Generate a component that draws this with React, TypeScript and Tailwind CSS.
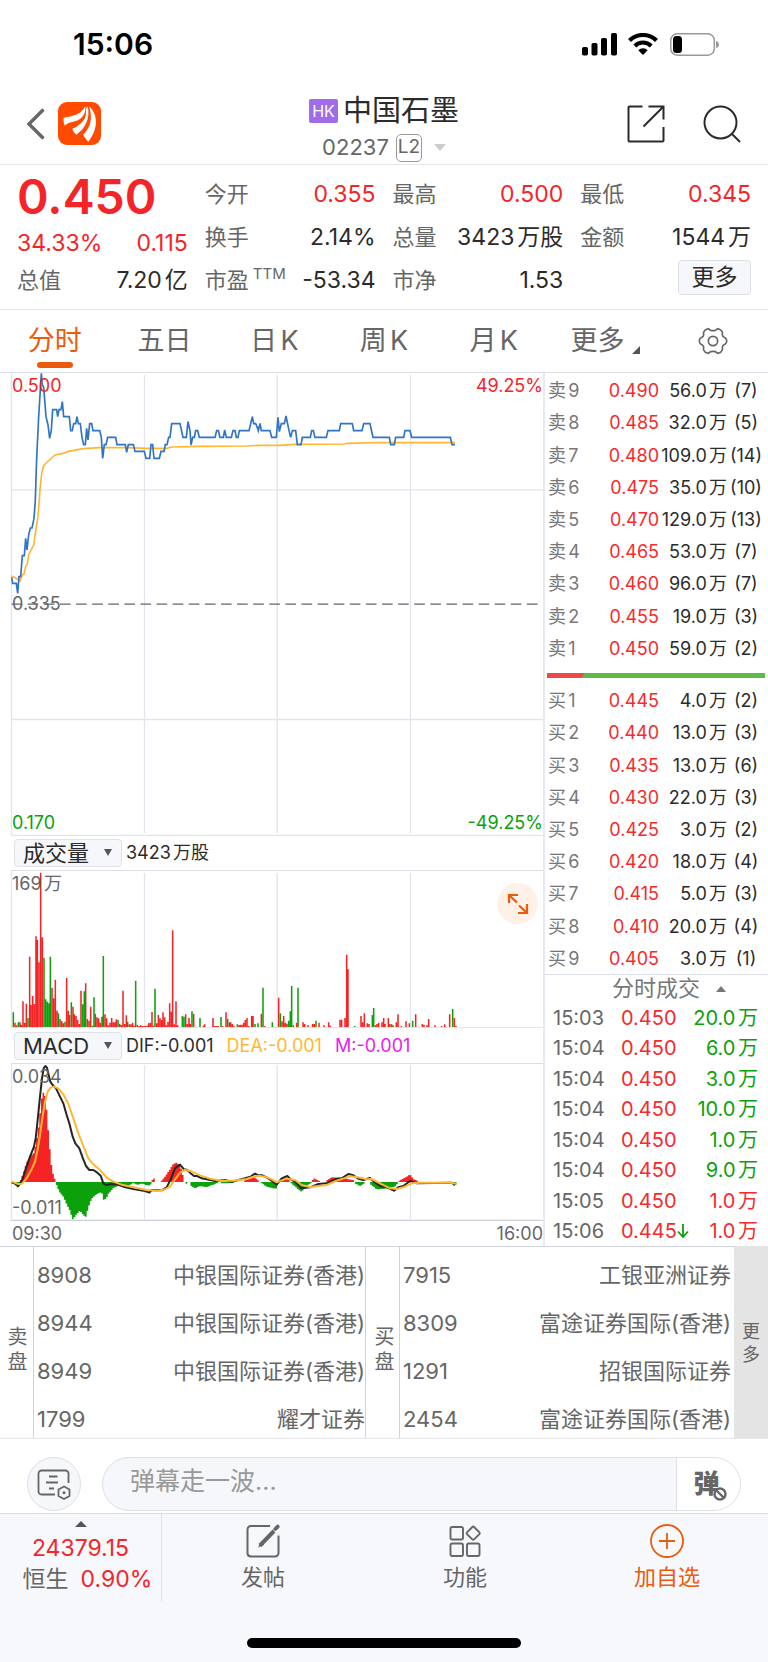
import React from "react";

type Level = [label: string, price: string, volume: string, count: string];
type Bar = [x: number, top: number];

const sells: Level[] = [
  ["卖9", "0.490", "56.0万", "(7)"],
  ["卖8", "0.485", "32.0万", "(5)"],
  ["卖7", "0.480", "109.0万", "(14)"],
  ["卖6", "0.475", "35.0万", "(10)"],
  ["卖5", "0.470", "129.0万", "(13)"],
  ["卖4", "0.465", "53.0万", "(7)"],
  ["卖3", "0.460", "96.0万", "(7)"],
  ["卖2", "0.455", "19.0万", "(3)"],
  ["卖1", "0.450", "59.0万", "(2)"],
];

const buys: Level[] = [
  ["买1", "0.445", "4.0万", "(2)"],
  ["买2", "0.440", "13.0万", "(3)"],
  ["买3", "0.435", "13.0万", "(6)"],
  ["买4", "0.430", "22.0万", "(3)"],
  ["买5", "0.425", "3.0万", "(2)"],
  ["买6", "0.420", "18.0万", "(4)"],
  ["买7", "0.415", "5.0万", "(3)"],
  ["买8", "0.410", "20.0万", "(4)"],
  ["买9", "0.405", "3.0万", "(1)"],
];

const trades = [
  { time: "15:03", price: "0.450", volume: "20.0万", up: false },
  { time: "15:04", price: "0.450", volume: "6.0万", up: false },
  { time: "15:04", price: "0.450", volume: "3.0万", up: false },
  { time: "15:04", price: "0.450", volume: "10.0万", up: false },
  { time: "15:04", price: "0.450", volume: "1.0万", up: false },
  { time: "15:04", price: "0.450", volume: "9.0万", up: false },
  { time: "15:05", price: "0.450", volume: "1.0万", up: true },
  { time: "15:06", price: "0.445", volume: "1.0万", up: true, drop: true },
];

const sellBrokers = [
  ["8908", "中银国际证券(香港)"],
  ["8944", "中银国际证券(香港)"],
  ["8949", "中银国际证券(香港)"],
  ["1799", "耀才证券"],
];

const buyBrokers = [
  ["7915", "工银亚洲证券"],
  ["8309", "富途证券国际(香港)"],
  ["1291", "招银国际证券"],
  ["2454", "富途证券国际(香港)"],
];

// Chart series use three drawing units per CSS pixel.
const priceLine =
  "35,832 38,850 49,850 53,880 57,830 62,830 67,767 73,767 77,715 81,750 86,705 91,684 96,684 102,655 106,600 110,475 116,350 124,220 127,255 131,262 138,350 144,375 149,415 154,390 158,329 170,329 173,350 177,329 183,329 187,305 191,350 208,350 212,392 217,392 221,371 227,371 231,350 235,371 241,371 246,412 251,434 256,434 260,385 264,420 269,371 275,371 279,392 299,392 304,412 308,475 313,434 318,434 323,412 347,412 351,434 376,434 380,457 385,434 400,434 405,454 433,454 438,475 449,475 453,434 458,434 462,475 478,475 483,454 492,454 496,434 501,434 506,412 510,412 515,371 540,371 549,412 559,412 564,365 570,392 573,435 578,412 583,412 587,392 593,392 598,412 645,412 650,392 655,392 660,412 670,412 674,390 679,412 694,412 699,392 705,392 709,412 714,412 718,392 747,392 757,350 761,371 767,371 771,380 775,392 780,370 784,392 810,392 815,412 829,412 834,352 838,395 844,371 853,371 858,348 867,392 872,412 877,392 887,392 892,434 903,434 907,412 931,412 935,392 940,392 945,412 979,412 984,392 1018,392 1022,371 1057,371 1061,392 1086,392 1091,371 1110,371 1119,412 1168,412 1172,434 1183,434 1187,412 1211,412 1215,392 1230,392 1235,412 1351,412 1356,434 1365,434";
const averageLine =
  "35,828 48,835 60,843 67,825 72,822 77,800 82,792 86,765 93,750 101,735 106,700 114,650 120,570 125,520 131,497 145,483 165,465 190,460 205,454 250,446 300,443 380,443 440,445 500,445 515,441 600,439 740,438 780,436 840,436 880,433 1035,432 1040,430 1120,428 1365,428";

const volumeUp: Bar[] = [
  [45, 668], [50, 676], [60, 667], [64, 675], [69, 604], [74, 668], [79, 611], [89, 470], [93, 615], [98, 588], [103, 612], [108, 409],
  [112, 420], [117, 487], [122, 218], [127, 412], [156, 563], [161, 595], [166, 539], [171, 632], [180, 657], [185, 663], [190, 670],
  [200, 534], [205, 632], [209, 645], [219, 620], [223, 643], [228, 648], [233, 660], [238, 672], [243, 572], [257, 550], [267, 662],
  [272, 620], [286, 641], [291, 652], [296, 655], [301, 668], [315, 643], [320, 655], [325, 676], [330, 668], [335, 654], [340, 667],
  [345, 667], [349, 658], [359, 672], [364, 675], [369, 572], [374, 672], [379, 646], [388, 673], [393, 673], [398, 668], [403, 677],
  [412, 675], [417, 678], [422, 676], [427, 678], [432, 678], [437, 678], [442, 677], [446, 670], [451, 668], [456, 636], [461, 677],
  [470, 670], [475, 645], [480, 655], [485, 660], [489, 637], [494, 652], [499, 676], [504, 665], [509, 610], [514, 635], [518, 391],
  [523, 673], [528, 604], [533, 676], [557, 643], [562, 672], [567, 654], [571, 672], [581, 641], [610, 677], [614, 673], [639, 654],
  [644, 678], [649, 678], [654, 678], [668, 678], [678, 637], [688, 667], [692, 667], [697, 672], [702, 678], [717, 676], [721, 674],
  [726, 674], [731, 668], [736, 660], [741, 654], [746, 678], [755, 648], [759, 648], [784, 641], [794, 678], [836, 593], [846, 664],
  [851, 648], [856, 668], [861, 671], [880, 676], [890, 668], [909, 667], [914, 672], [924, 676], [938, 672], [943, 672], [957, 668],
  [972, 676], [986, 667], [991, 677], [1020, 659], [1025, 659], [1035, 654], [1040, 464], [1044, 508], [1083, 648], [1088, 667],
  [1093, 640], [1102, 670], [1107, 672], [1126, 676], [1131, 672], [1136, 668], [1146, 667], [1151, 654], [1155, 672], [1165, 654],
  [1170, 672], [1179, 676], [1189, 667], [1194, 643], [1204, 678], [1218, 664], [1228, 670], [1247, 643], [1267, 672], [1272, 675],
  [1281, 676], [1286, 657], [1305, 676], [1325, 678], [1334, 673], [1349, 643], [1363, 654], [1368, 678],
];
const volumeDown: Bar[] = [
  [40, 637], [55, 667], [84, 654], [132, 473], [137, 598], [142, 605], [147, 610], [151, 470], [175, 640], [195, 665], [214, 607],
  [248, 613], [253, 574], [262, 657], [277, 677], [282, 592], [306, 650], [310, 468], [354, 660], [383, 665], [407, 542], [465, 566],
  [547, 648], [552, 650], [576, 634], [600, 654], [663, 651], [683, 656], [712, 673], [765, 672], [774, 670], [789, 563], [817, 667],
  [841, 640], [866, 662], [871, 634], [875, 558], [894, 563], [948, 662], [1064, 678], [1117, 645], [1121, 624], [1175, 673],
  [1238, 662], [1358, 627],
];

const ZERO = 456;
// Outlines of each histogram run; values above ZERO are drawn red, below green.
const macdRuns: Bar[][] = [
  [[38, 459], [46, 464], [54, 474], [60, 462]],
  [[62, 450], [70, 430], [79, 400], [90, 380], [101, 370], [107, 345], [113, 310], [118, 275], [122, 232], [127, 190], [133, 187], [138, 215], [142, 270], [147, 328], [152, 388], [157, 425], [162, 440], [166, 452]],
  [[170, 465], [175, 478], [180, 488], [190, 500], [200, 522], [210, 542], [218, 569], [224, 560], [232, 550], [240, 542], [248, 552], [257, 562], [263, 540], [270, 517], [276, 505], [285, 496], [300, 487], [306, 490], [310, 510], [318, 506], [325, 492], [340, 474], [360, 466], [372, 463], [380, 470], [388, 466], [400, 459], [412, 465], [425, 460], [437, 465], [450, 467], [454, 459]],
  [[457, 450], [461, 444], [466, 453]],
  [[485, 452], [495, 440], [510, 418], [520, 402], [530, 398], [540, 406], [545, 422], [552, 450]],
  [[559, 461], [563, 461]],
  [[574, 468], [585, 475], [600, 468], [620, 471], [640, 464], [652, 459]],
  [[665, 460], [700, 459]],
  [[735, 451], [750, 446], [765, 442], [774, 451]],
  [[785, 459], [800, 470], [820, 475], [833, 476]],
  [[842, 450], [858, 443], [870, 452]],
  [[874, 460], [895, 478], [905, 486], [915, 470], [934, 459]],
  [[938, 450], [942, 445], [960, 454]],
  [[982, 450], [995, 442], [1020, 443], [1060, 450]],
  [[1067, 461], [1080, 468], [1093, 460]],
  [[1113, 464], [1130, 478], [1155, 476], [1185, 470], [1193, 460]],
  [[1198, 452], [1220, 440], [1230, 433], [1240, 447], [1255, 454]],
  [[1260, 458], [1355, 458], [1368, 465]],
];
const difLine =
  "35,458 45,461 55,468 66,452 78,415 90,380 102,350 107,325 113,270 120,200 126,145 131,115 136,108 141,113 146,135 151,155 158,165 168,175 180,200 190,220 200,255 208,280 218,320 226,340 238,355 248,383 258,408 268,420 280,420 292,428 302,437 310,460 318,465 335,462 350,463 370,470 400,477 430,482 448,488 455,480 485,481 500,472 512,448 525,415 540,404 552,418 562,420 570,428 582,438 592,438 605,445 620,448 645,453 675,450 695,455 715,450 735,445 752,440 765,431 775,436 787,436 800,442 815,452 830,464 845,445 862,438 872,448 885,455 905,475 930,472 955,462 980,460 1005,448 1025,445 1045,432 1060,436 1075,446 1090,450 1110,444 1122,455 1140,468 1160,472 1182,482 1195,472 1210,468 1230,453 1250,460 1355,458 1365,466";
const deaLine =
  "35,455 55,462 66,461 80,445 95,418 105,395 113,358 120,315 127,265 135,215 143,185 152,173 162,170 175,175 190,193 205,222 220,265 235,310 250,348 265,385 280,403 300,420 320,443 340,455 365,464 400,472 440,480 475,482 495,478 510,470 520,455 540,428 555,420 575,424 600,436 630,446 665,452 700,452 740,447 760,440 775,437 795,440 815,448 830,457 845,451 860,446 885,450 905,465 930,471 980,465 1010,452 1050,439 1070,441 1100,448 1115,447 1140,460 1170,475 1190,477 1210,472 1235,460 1260,458 1350,458 1368,461";

function histogram(run: Bar[]): Bar[] {
  const bars: Bar[] = [];
  const end = run[run.length - 1][0];
  for (let x = run[0][0]; x <= end; x += 4.86) {
    const i = Math.max(1, run.findIndex((p) => p[0] >= x));
    const [x0, y0] = run[i - 1];
    const [x1, y1] = run[i];
    bars.push([x, y0 + ((y1 - y0) * (x - x0)) / (x1 - x0)]);
  }
  return bars;
}

function barPath(bars: Bar[], base: number) {
  return bars.map(([x, y]) => `M${x} ${base}V${y}`).join("");
}

function Grid({ top, bottom }: { top: number; bottom: number }) {
  return (
    <path
      d={`M34.5 ${top - 8}V${bottom + 8}M433.5 ${top}V${bottom}M831.5 ${top}V${bottom}M1231.5 ${top}V${bottom}`}
      stroke="#e2e5ee"
      strokeWidth="4"
      fill="none"
    />
  );
}

function PriceChart() {
  return (
    <div className="relative">
      <svg viewBox="0 219 1629 1389" preserveAspectRatio="none" className="block h-[463px] w-full">
        <Grid top={225} bottom={1599} />
        <path d="M34 569.5H1629M34 1258.5H1629M34 1606.5H1629" stroke="#e2e5ee" strokeWidth="4" />
        <path d="M35 912.5H1615" stroke="#666" strokeWidth="4" strokeDasharray="32 16.3" />
        <polyline points={averageLine} fill="none" stroke="#ffb733" strokeWidth="5" />
        <polyline points={priceLine} fill="none" stroke="#2f74c5" strokeWidth="5" />
      </svg>
      <span className="absolute left-3 top-px text-lg leading-6 text-[#f42528]">0.500</span>
      <span className="absolute right-0 top-px text-lg leading-6 text-[#f42528]">49.25%</span>
      <span className="absolute left-3 top-[219px] text-lg leading-6 text-[#666]">0.335</span>
      <span className="absolute bottom-px left-3 text-lg leading-6 text-[#0aa10a]">0.170</span>
      <span className="absolute bottom-px right-0 text-lg leading-6 text-[#0aa10a]">-49.25%</span>
    </div>
  );
}

function VolumeChart() {
  return (
    <div className="relative">
      <svg viewBox="0 213 1629 471" preserveAspectRatio="none" className="block h-[157px] w-full">
        <Grid top={219} bottom={681} />
        <path d="M34 682.5H1629" stroke="#e2e5ee" strokeWidth="3" />
        <path d={barPath(volumeUp, 681)} stroke="#f52424" strokeWidth="4.6" />
        <path d={barPath(volumeDown, 681)} stroke="#0aa10a" strokeWidth="4.6" />
      </svg>
      <span className="absolute left-3 top-px text-lg leading-6 text-[#666]">169万</span>
      <button aria-label="全屏" className="absolute right-[5px] top-3 flex size-[41px] items-center justify-center rounded-full bg-[#fff0e8]">
        <svg viewBox="0 0 22 22" className="size-[22px]" fill="none" stroke="#ec5a0c" strokeWidth="2.2">
          <path d="M2 10V2h9M2.500 2.500l7.500 7M12 12.500l7.500 7M11 20H20v-9" />
        </svg>
      </button>
    </div>
  );
}

function MacdChart() {
  const bars = macdRuns.flatMap(histogram);
  return (
    <div className="relative">
      <svg viewBox="0 102 1629 471" preserveAspectRatio="none" className="block h-[157px] w-full">
        <Grid top={106} bottom={568} />
        <path d={barPath(bars.filter((b) => b[1] < ZERO), ZERO)} stroke="#f52424" strokeWidth="4.900" />
        <path d={barPath(bars.filter((b) => b[1] >= ZERO), ZERO)} stroke="#0aa10a" strokeWidth="4.900" />
        <path d="M34 571.5H1629" stroke="#cdd0d8" strokeWidth="4" />
        <polyline points={difLine} fill="none" stroke="#252525" strokeWidth="6" strokeLinejoin="round" />
        <polyline points={deaLine} fill="none" stroke="#ffb733" strokeWidth="6" strokeLinejoin="round" />
      </svg>
      <span className="absolute left-3 top-px text-lg leading-6 text-[#666]">0.034</span>
      <span className="absolute bottom-px left-3 text-lg leading-6 text-[#666]">-0.011</span>
    </div>
  );
}

function IndicatorSelect({ label, options }: { label: string; options: string[] }) {
  return (
    <span className="relative ml-[14px] inline-flex">
      <select
        aria-label={label}
        className="h-7 w-[108px] appearance-none rounded border border-[#dfe1e7] bg-[#f6f7fa] pl-2 text-[22px] leading-[26px] text-[#2b2b2b]"
      >
        {options.map((o) => (
          <option key={o}>{o}</option>
        ))}
      </select>
      <svg viewBox="0 0 8 7" className="pointer-events-none absolute right-[10px] top-[10px] h-[7px] w-2">
        <path d="M0 0h8L4 7z" fill="#555" />
      </svg>
    </span>
  );
}

function LevelTable({ caption, rows }: { caption: string; rows: Level[] }) {
  return (
    <table aria-label={caption} className="h-[290px] w-full table-fixed border-collapse text-lg leading-6">
      <colgroup>
        <col className="w-[43px]" />
        <col className="w-[71px]" />
        <col />
        <col className="w-[38px]" />
      </colgroup>
      <tbody>
        {rows.map(([label, price, volume, count]) => (
          <tr key={label}>
            <th scope="row" className="whitespace-nowrap p-0 pl-[3px] pt-[2px] text-left font-normal text-[#777]">{label}</th>
            <td className="p-0 pt-[2px] text-right text-[#f52a2c]">{price}</td>
            <td className="p-0 pt-[2px] text-[#2b2b2b]">
              <div className="flex justify-end whitespace-nowrap">{volume}</div>
            </td>
            <td className="whitespace-nowrap p-0 pt-[2px] text-center text-[#2b2b2b]">{count}</td>
          </tr>
        ))}
      </tbody>
    </table>
  );
}

function BrokerTable({ caption, rows, className }: { caption: string; rows: string[][]; className: string }) {
  return (
    <div className={"border-l border-[#cfd3dc] pb-[5px] " + className}>
      <table aria-label={caption} className="w-full border-collapse text-[22px] leading-7 text-[#666]">
        <tbody>
          {rows.map(([id, name]) => (
            <tr key={id} className="group">
              <td className="p-0 pb-[6px] pt-[14px] group-last:pb-0">{id}</td>
              <td className="whitespace-nowrap p-0 pb-[6px] pt-[14px] text-right group-last:pb-0">{name}</td>
            </tr>
          ))}
        </tbody>
      </table>
    </div>
  );
}

function Stat({ label, value, red, sup }: { label: string; value: string; red?: boolean; sup?: string }) {
  return (
    <div className="flex h-[43px] items-center justify-between whitespace-nowrap pt-[2px]">
      <dt className="flex items-center text-[22px] text-[#666]">
        {label}
        {sup && <span className="ml-1 self-start text-[15px] leading-5">{sup}</span>}
      </dt>
      <dd className={red ? "text-[23px] text-[#f42528]" : "text-[23px] text-[#2b2b2b]"}>{value}</dd>
    </div>
  );
}

function StatusBar() {
  return (
    <div className="flex h-[83px] items-center justify-between pl-[73px] pr-[49px] pt-[5px]">
      <span className="text-[30px] font-semibold text-black">15:06</span>
      <div className="flex items-center">
        <svg viewBox="0 0 35 23" className="h-[23px] w-[35px]">
          <rect x="0" y="14" width="6" height="8.500" rx="1.800" />
          <rect x="9.500" y="10" width="6" height="12.500" rx="1.800" />
          <rect x="19" y="5" width="6" height="17.500" rx="1.800" />
          <rect x="29" y="0" width="6" height="22.500" rx="1.800" />
        </svg>
        <svg viewBox="0 0 30 22" className="ml-[11px] h-[22px] w-[30px]">
          <path d="M1.500 7.600a19 19 0 0 1 27 0" fill="none" stroke="#000" strokeWidth="4.200" />
          <path d="M6.800 13a11.600 11.600 0 0 1 16.400 0" fill="none" stroke="#000" strokeWidth="4" />
          <path d="M15 22l-4.700-4.700a6.700 6.700 0 0 1 9.400 0z" />
        </svg>
        <svg viewBox="0 0 49 23" className="ml-3 h-[23px] w-[49px]">
          <rect x=".8" y=".8" width="43.500" height="21.400" rx="6.500" fill="none" stroke="#999" strokeWidth="1.500" />
          <rect x="3" y="3" width="9" height="17" rx="3.500" />
          <path d="M46 8q3 1 3 3.500T46 15z" fill="#999" />
        </svg>
      </div>
    </div>
  );
}

function Header() {
  return (
    <header className="grid h-[82px] grid-cols-[1fr_auto_1fr] items-center border-b border-[#e6e6e8]">
      <div className="flex items-center pl-[26px]">
        <button aria-label="返回">
          <svg viewBox="0 0 19 32" className="h-8 w-[19px]" fill="none" stroke="#666" strokeWidth="3.400">
            <path d="M17.500 1.500L3 16l14.500 14.500" />
          </svg>
        </button>
        <a href="#home" aria-label="首页" className="ml-[13px]">
          <svg viewBox="0 0 129 129" className="size-[43px]">
            <rect width="129" height="129" rx="27" fill="#ff4a00" />
            <g fill="#fff">
              <path d="M17 47C45 43 70 38 82 13C86 43 62 57 44 60C32 62 25 66 20 71C17 62 16 55 17 47Z" />
              <path d="M89 13C98 50 80 82 55 98C49 92 45 87 43 80C70 68 88 50 84 20Z" />
              <path d="M93 13C108 25 114 45 114 60C113 85 103 103 91 119C85 112 79 105 75 98C96 80 106 50 93 13Z" />
            </g>
          </svg>
        </a>
      </div>
      <div className="flex flex-col items-center pt-2">
        <h1 className="flex h-[34px] items-center whitespace-nowrap text-[29px] leading-[34px] text-[#2b2b2b]">
          <span className="mr-[5px] flex h-6 w-[29px] items-center justify-center rounded-xs bg-[#a06cea] text-base text-white">HK</span>
          中国石墨
        </h1>
        <div className="mt-[6px] flex h-7 items-center text-[22px] text-[#666]">
          02237
          <span className="ml-[7px] flex h-7 w-[26px] items-center justify-center rounded-[5px] border border-[#999] text-[19px]">L2</span>
          <svg viewBox="0 0 12 7" className="ml-3 h-[7px] w-3">
            <path d="M0 0h12L6 7z" fill="#ccc" />
          </svg>
        </div>
      </div>
      <div className="flex items-center justify-end gap-[38px] pr-[27px]">
        <button aria-label="分享">
          <svg viewBox="0 0 38 38" className="size-[38px]" fill="none" stroke="#2b2b2b" strokeWidth="2">
            <path d="M15.500 1.500H2.500a1 1 0 0 0-1 1v33a1 1 0 0 0 1 1h33a1 1 0 0 0 1-1V22M21.500 1.500h15v13M36 2L16.500 21.500" />
          </svg>
        </button>
        <button aria-label="搜索">
          <svg viewBox="0 0 38 38" className="size-[38px]" fill="none" stroke="#2b2b2b" strokeWidth="2">
            <circle cx="17.500" cy="17.500" r="16" />
            <path d="M28.500 28.500l8.500 8.500" />
          </svg>
        </button>
      </div>
    </header>
  );
}

function Quote() {
  return (
    <section className="grid grid-cols-4 gap-x-[17px] border-b border-[#e6e6e8] px-[17px] pb-2 pt-[7px]">
      <div>
        <div className="h-[50px] text-[48px] font-semibold leading-[50px] text-[#f42528]">0.450</div>
        <div className="flex h-9 items-center justify-between pt-[6px] text-[23px] leading-[30px] text-[#f42528]">
          <span>34.33%</span>
          <span>0.115</span>
        </div>
        <dl>
          <Stat label="总值" value="7.20亿" />
        </dl>
      </div>
      <dl>
        <Stat label="今开" value="0.355" red />
        <Stat label="换手" value="2.14%" />
        <Stat label="市盈" sup="TTM" value="-53.34" />
      </dl>
      <dl>
        <Stat label="最高" value="0.500" red />
        <Stat label="总量" value="3423万股" />
        <Stat label="市净" value="1.53" />
      </dl>
      <div>
        <dl>
          <Stat label="最低" value="0.345" red />
          <Stat label="金额" value="1544万" />
        </dl>
        <button className="ml-auto mt-[2px] flex h-[35px] w-[73px] items-center justify-center rounded border border-[#dcdee6] bg-[#f6f7fa] text-[23px] text-[#2b2b2b]">
          更多
        </button>
      </div>
    </section>
  );
}

function Tabs() {
  return (
    <nav className="grid h-[63px] grid-cols-7 border-b border-[#dcdfe6] text-[27px] text-[#666]">
      <button className="relative text-[#ec5a0c]">
        分时
        <span className="absolute inset-x-0 bottom-1 mx-auto h-[6px] w-9 rounded-full bg-[#ec5a0c]" />
      </button>
      <button>五日</button>
      <button>日K</button>
      <button>周K</button>
      <button>月K</button>
      <button className="flex items-center justify-center pl-1">
        更多
        <svg viewBox="0 0 8 8" className="ml-2 mt-[18px] size-2">
          <path d="M8 0v8H0z" fill="#555" />
        </svg>
      </button>
      <button aria-label="设置" className="flex items-center justify-center">
        <svg viewBox="0 0 90 84" className="h-7 w-[30px]" fill="none" stroke="#666" strokeWidth="5">
          <path
            strokeLinejoin="round"
            d="M29 5C32 5 35 9 38 10Q45 12 52 10C55 9 58 5 61 5Q70 8 73 15C74 19 72 23 74 27Q77 31 82 33C86 35 86 38 86 42C86 46 86 49 82 51Q77 53 74 57C72 61 74 65 73 69Q70 76 61 79C58 79 55 75 52 74Q45 72 38 74C35 75 32 79 29 79Q20 76 17 69C16 65 18 61 16 57Q13 53 8 51C4 49 4 46 4 42C4 38 4 35 8 33Q13 31 16 27C18 23 16 19 17 15Q20 8 29 5Z"
          />
          <circle cx="45" cy="42" r="14" />
        </svg>
      </button>
    </nav>
  );
}

function MarketPanel() {
  return (
    <main className="flex">
      <div className="min-w-0 flex-1">
        <PriceChart />
        <div className="ml-[11px] flex h-[35px] items-center border-b border-[#dcdfe6] text-lg text-[#2b2b2b]">
          <span className="-ml-[11px] inline-flex">
            <IndicatorSelect label="副图一" options={["成交量", "MACD"]} />
          </span>
          <span className="ml-1">3423万股</span>
        </div>
        <VolumeChart />
        <div className="ml-[11px] flex h-9 items-center border-b border-[#dcdfe6] text-lg">
          <span className="-ml-[11px] inline-flex">
            <IndicatorSelect label="副图二" options={["MACD", "成交量"]} />
          </span>
          <span className="ml-1 text-[#2b2b2b]">DIF:-0.001</span>
          <span className="ml-[13px] text-[#ffb733]">DEA:-0.001</span>
          <span className="ml-[13px] text-[#e224e8]">M:-0.001</span>
        </div>
        <MacdChart />
        <div className="flex h-[25px] items-center justify-between pl-3 text-lg text-[#666]">
          <span>09:30</span>
          <span>16:00</span>
        </div>
      </div>
      <aside className="w-[225px] border-l-2 border-[#e8eaf1]">
        <div className="pr-[3px] pt-px">
          <LevelTable caption="卖盘" rows={sells} />
          <svg viewBox="0 0 218 5" preserveAspectRatio="none" className="mb-[6px] ml-[2px] mt-[9px] block h-[5px] w-[218px]">
            <path d="M0 0h218v5H0z" fill="#5bbb45" />
            <path d="M0 0h38l-4 5H0z" fill="#f04848" />
          </svg>
          <LevelTable caption="买盘" rows={buys} />
        </div>
        <button className="flex h-7 w-full items-center border-t border-[#dcdfe6] pl-[67px] text-[22px] leading-[27px] text-[#777]">
          分时成交
          <svg viewBox="0 0 10 6" className="ml-4 h-[6px] w-[10px]">
            <path d="M5 0l5 6H0z" fill="#777" />
          </svg>
        </button>
        <table aria-label="分时成交" className="h-[244px] w-full table-fixed border-collapse text-xl leading-6">
          <colgroup>
            <col className="w-[76px]" />
            <col className="w-[68px]" />
            <col />
          </colgroup>
          <tbody>
            {trades.map((t, i) => (
              <tr key={i}>
                <td className="p-0 pl-2 pt-px text-[#666]">{t.time}</td>
                <td className="p-0 pt-px text-[#f52a2c]">
                  <div className="flex items-center">
                    {t.price}
                    {t.drop && (
                      <svg viewBox="0 0 12 14" className="h-[14px] w-3 shrink-0" fill="none" stroke="#0aa10a" strokeWidth="1.800">
                        <path d="M6 0v13M1 7.500l5 5.500 5-5.500" />
                      </svg>
                    )}
                  </div>
                </td>
                <td className={t.up ? "p-0 pr-[10px] pt-px text-right text-[#f52a2c]" : "p-0 pr-[10px] pt-px text-right text-[#0aa10a]"}>{t.volume}</td>
              </tr>
            ))}
          </tbody>
        </table>
      </aside>
    </main>
  );
}

function Brokers() {
  return (
    <section className="grid grid-cols-[33px_332fr_34px_335fr_34px] border-b border-[#e6e6e8]">
      <div className="flex items-center justify-center border-t border-[#cfd3dc] pl-[2px] pt-[14px] text-xl leading-[25px] text-[#666]">
        <span className="w-5">卖盘</span>
      </div>
      <BrokerTable caption="卖盘经纪" rows={sellBrokers} className="border-t pl-[3px]" />
      <div className="flex items-center justify-center border-l border-t border-[#cfd3dc] pl-[4px] pt-[14px] text-xl leading-[25px] text-[#666]">
        <span className="w-5">买盘</span>
      </div>
      <BrokerTable caption="买盘经纪" rows={buyBrokers} className="border-t pl-[3px] pr-[3px]" />
      <button className="flex items-center justify-center bg-[#e4e4e5] pt-[2px] text-lg leading-[23px] text-[#666]">
        <span className="w-[18px]">更多</span>
      </button>
    </section>
  );
}

function CommentBar() {
  return (
    <div className="flex items-center px-[27px] pb-[2px] pt-[18px]">
      <button aria-label="弹幕设置" className="flex size-[54px] shrink-0 items-center justify-center rounded-full border border-[#dddfe7] bg-[#f6f7fa]">
        <svg viewBox="0 0 34 32" className="h-8 w-[34px]" fill="none" stroke="#666" strokeWidth="1.800">
          <path d="M31.500 15V5.500a3 3 0 0 0-3-3h-24a3 3 0 0 0-3 3v18a3 3 0 0 0 3 3H18M12 8.500h8.500M9 14.500h12M12 20.500h5" />
          <path d="M27 18.500l5.500 3v6.500l-5.500 3-5.500-3v-6.500z" strokeLinejoin="round" />
          <circle cx="27" cy="24.700" r="1.500" fill="#666" stroke="none" />
        </svg>
      </button>
      <div className="ml-[21px] flex h-[54px] min-w-0 flex-1 overflow-hidden rounded-full border border-[#dddfe7] bg-[#f6f7fa]">
        <input
          aria-label="弹幕"
          placeholder="弹幕走一波..."
          className="min-w-0 flex-1 bg-transparent pb-1 pl-[27px] text-[25px] text-[#333] outline-none placeholder:text-[#999]"
        />
        <button aria-label="关闭弹幕" className="flex w-16 items-center justify-center border-l border-[#dddfe7] bg-white">
          <span className="relative pr-1 text-[26px] font-black leading-8 text-[#666]">
            弹
            <svg viewBox="0 0 14 14" className="absolute -bottom-[1px] -right-[3px] size-[14px]" fill="#fff" stroke="#666" strokeWidth="2.400">
              <circle cx="7" cy="7" r="5.500" />
              <path d="M3.500 3.500l7 7" />
            </svg>
          </span>
        </button>
      </div>
    </div>
  );
}

function BottomBar() {
  return (
    <footer className="border-t border-[#d9dce3] bg-[#f7f8fb]">
      <div className="flex h-[87px] text-[22px] text-[#666]">
        <button className="flex w-[162px] flex-col items-center border-r border-[#e0e2e8] pt-[7px] text-[23px] text-[#f42528]">
          <svg viewBox="0 0 12 6" className="h-[6px] w-3">
            <path d="M6 0l6 6H0z" fill="#555" />
          </svg>
          <span className="mt-[5px] h-8 leading-8">24379.15</span>
          <span className="flex h-[30px] gap-3 pl-[14px] leading-[30px]">
            <span className="text-[#666]">恒生</span>0.90%
          </span>
        </button>
        <nav className="grid flex-1 grid-cols-3">
          <button className="flex flex-col items-center pt-[10px]">
            <svg viewBox="0 0 34 34" className="size-[34px]" fill="none" stroke="#666" strokeWidth="2">
              <path d="M24 2H5a3.500 3.500 0 0 0-3.500 3.500v24A3.500 3.500 0 0 0 5 32.500h24a3.500 3.500 0 0 0 3.500-3.500V11.500" />
              <path d="M28 7L14 21.500" strokeWidth="4" />
              <path d="M15 17.500l-3 6 6-2.500z" fill="#666" stroke="none" />
              <path d="M29.300 5l2.400-2.400" strokeWidth="3.800" strokeLinecap="round" />
            </svg>
            <span className="mt-[6px] leading-[26px]">发帖</span>
          </button>
          <button className="flex flex-col items-center pt-[10px]">
            <svg viewBox="0 0 34 34" className="size-[34px]" fill="none" stroke="#666" strokeWidth="1.900">
              <rect x="2.500" y="3" width="12.500" height="12.500" rx="1.800" />
              <rect x="2.500" y="19.500" width="12.500" height="12.500" rx="1.800" />
              <rect x="19" y="19.500" width="12.500" height="12.500" rx="1.800" />
              <rect x="20.200" y="4.200" width="10" height="10" rx="1.200" transform="rotate(45 25.200 9.200)" />
            </svg>
            <span className="mt-[6px] leading-[26px]">功能</span>
          </button>
          <button className="flex flex-col items-center pt-[10px] text-[#ec5a0c]">
            <svg viewBox="0 0 34 34" className="size-[34px]" fill="none" stroke="#ec5a0c" strokeWidth="1.800">
              <circle cx="17" cy="17" r="16" />
              <path d="M17 9v16M9 17h16" />
            </svg>
            <span className="mt-[6px] leading-[26px]">加自选</span>
          </button>
        </nav>
      </div>
      <div className="flex justify-center pb-[14px] pt-[37px]">
        <span className="h-[10px] w-[274px] rounded-full bg-black" />
      </div>
    </footer>
  );
}

export default function App() {
  return (
    <div className="bg-white [font-family:Inter,'Noto_Sans_CJK_SC',sans-serif] [text-autospace:normal]">
      <StatusBar />
      <Header />
      <Quote />
      <Tabs />
      <MarketPanel />
      <Brokers />
      <CommentBar />
      <BottomBar />
    </div>
  );
}
